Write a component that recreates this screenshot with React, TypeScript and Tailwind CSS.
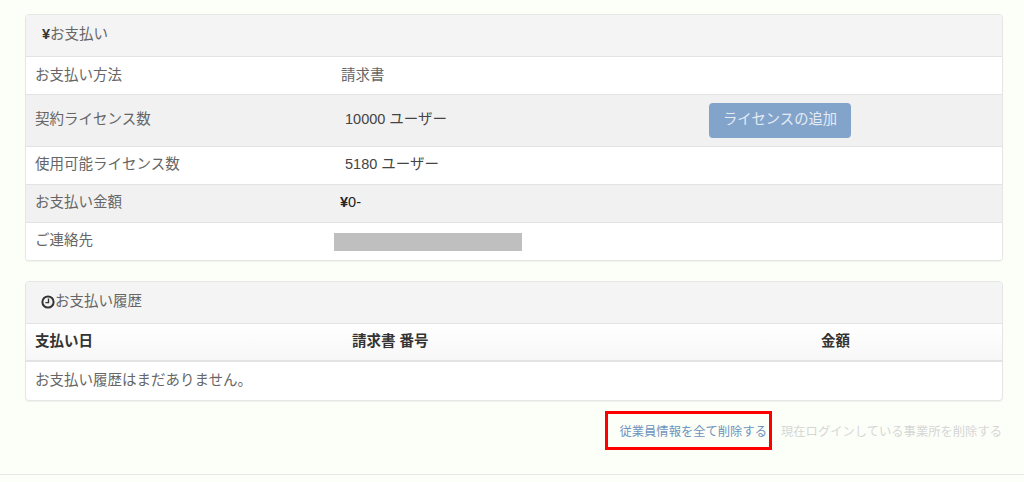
const font = { fontFamily: '"Liberation Sans", "Noto Sans CJK JP", sans-serif' };

const rowClass = "flex items-center border-t border-[#e3e3e3] px-[9px] pb-[1px] text-[14.5px] text-[#666]";

function Panel({ children }: { children: React.ReactNode }) {
  return (
    <div className="overflow-hidden rounded-[4px] border border-[#e6e6e6] bg-white shadow-[0_1px_1px_rgba(0,0,0,0.05)]">
      {children}
    </div>
  );
}

function PanelHeading({ children }: { children: React.ReactNode }) {
  return (
    <div className="flex h-[41px] items-center bg-[#f4f4f4] pb-[2px] pl-[16px] text-[14.5px] text-[#666]">
      {children}
    </div>
  );
}

export default function App() {
  return (
    <div className="h-[482px] w-[1024px] overflow-hidden bg-[#fcfff8]" style={font}>
      <div className="h-[475px] border-b border-[#e8e8e8] pl-[25px] pr-[21px] pt-[14px]">
        <Panel>
          <PanelHeading>
            <span className="font-bold text-[#333]">¥</span>お支払い
          </PanelHeading>
          <div className="flex h-[38px] items-center border-t border-[#e3e3e3] bg-white px-[9px] text-[14.5px] text-[#666]">
            <span className="w-[306px]">お支払い方法</span>
            <span>請求書</span>
          </div>
          <div className={`${rowClass} h-[52px] bg-[#f1f1f1]`}>
            <span className="w-[310px] pb-[1px]">契約ライセンス数</span>
            <span className="w-[364px] pb-[1px] text-[#444]">10000 ユーザー</span>
            <button className="mt-[1px] h-[35px] w-[142px] rounded-[4px] bg-[#82a4cb] pb-[2px] text-[14.3px] text-[#e4ebf3]">
              ライセンスの追加
            </button>
          </div>
          <div className={`${rowClass} h-[38px] bg-white`}>
            <span className="w-[310px]">使用可能ライセンス数</span>
            <span className="text-[#444]">5180 ユーザー</span>
          </div>
          <div className={`${rowClass} h-[38px] bg-[#f1f1f1]`}>
            <span className="w-[305px]">お支払い金額</span>
            <span className="text-[#222]"><span className="font-bold">¥</span>0-</span>
          </div>
          <div className="flex h-[38px] items-center border-t border-[#e3e3e3] bg-white px-[9px] text-[14.5px] text-[#666]">
            <span className="w-[299px] pb-[1px]">ご連絡先</span>
            <span className="h-[18px] w-[188px] bg-[#bfbfbf]" />
          </div>
        </Panel>

        <div className="mt-[20px]">
          <Panel>
            <PanelHeading>
              <svg width="14" height="14" viewBox="0 0 14 14" className="-ml-px shrink-0" fill="none" stroke="#333">
                <circle cx="7" cy="7" r="5.6" strokeWidth="2" />
                <path d="M7.5 3.4V7.6H4.4" strokeWidth="1.4" />
              </svg>
              お支払い履歴
            </PanelHeading>
            <div className="flex h-[39px] items-center border-t border-b-2 border-[#e3e3e3] bg-gradient-to-b from-white to-[#f7f7f7] px-[9px] text-[14.5px] font-bold text-[#333]">
              <span className="w-[317px]">支払い日</span>
              <span className="w-[469px]">請求書 番号</span>
              <span>金額</span>
            </div>
            <div className="flex h-[38px] items-center px-[9px] pb-[1px] text-[14.5px] text-[#666]">
              お支払い履歴はまだありません。
            </div>
          </Panel>
        </div>

        <div className="mt-[10px] flex items-center justify-end text-[12.3px]">
          <a className="flex h-[39px] w-[167px] items-center justify-end border-[3px] border-[#ff0000] pr-[2px] pt-[3px] text-[#6f93bd]">
            従業員情報を全て削除する
          </a>
          <span className="ml-[9px] mr-px pt-[3px] text-[#d6d6d6]">現在ログインしている事業所を削除する</span>
        </div>
      </div>
    </div>
  );
}
